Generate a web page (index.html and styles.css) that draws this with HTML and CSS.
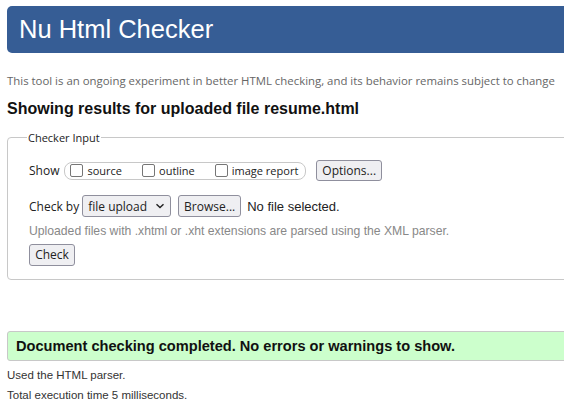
FILE: index.html
```html
<!DOCTYPE html>
<html lang="en">
<head>
<meta charset="utf-8">
<title>Nu Html Checker</title>
<link rel="stylesheet" href="styles.css">
</head>
<body>
<div class="page">
  <h1 class="banner">Nu Html Checker</h1>
  <p class="intro">This tool is an ongoing experiment in better HTML checking, and its behavior remains subject to change</p>
  <h2 class="results-title">Showing results for uploaded file resume.html</h2>
  <fieldset class="checker">
    <legend class="legend">Checker Input</legend>
    <div class="row show-row">
      <span class="label">Show</span>
      <div class="pill">
        <span class="opt"><span class="box"></span>source</span>
        <span class="opt"><span class="box"></span>outline</span>
        <span class="opt"><span class="box"></span>image report</span>
      </div>
      <span class="btn">Options...</span>
    </div>
    <div class="row check-row">
      <span class="label">Check by</span>
      <span class="select">file upload
        <svg class="chev" width="10" height="6" viewBox="0 0 10 6"><path d="M1.5 1.2 L5 4.6 L8.5 1.2" fill="none" stroke="#222" stroke-width="1.4"/></svg>
      </span>
      <span class="btn browse">Browse...</span>
      <span class="nofile">No file selected.</span>
    </div>
    <p class="hint">Uploaded files with .xhtml or .xht extensions are parsed using the XML parser.</p>
    <span class="btn check">Check</span>
  </fieldset>
  <div class="success">Document checking completed. No errors or warnings to show.</div>
  <p class="meta first">Used the HTML parser.</p>
  <p class="meta">Total execution time 5 milliseconds.</p>
</div>
</body>
</html>
```
FILE: styles.css
```css
html { overflow: hidden; background: #fff; }
body {
  margin: 0;
  font-family: "Liberation Sans", Arial, sans-serif;
  color: #222;
}
.page {
  width: 600px;
  padding: 6px 0 0 7px;
}
.banner {
  margin: 0;
  background: #365d95;
  color: #fff;
  font-weight: normal;
  font-size: 25.5px;
  line-height: 47px;
  height: 47px;
  padding-left: 12px;
  border-radius: 5px;
}
.intro {
  margin: 21px 0 0 0;
  font-family: "Open Sans", sans-serif;
  font-size: 11.4px;
  color: #666;
  line-height: 14px;
}
.results-title {
  margin: 11px 0 0 0;
  font-size: 16px;
  line-height: 20px;
  color: #111;
}
.checker {
  margin: 11px 0 0 0;
  border: 1px solid #c8c8c8;
  border-radius: 4px;
  padding: 15px 0 13px 21px;
  font-family: "Open Sans", sans-serif;
}
.legend {
  font-size: 11px;
  padding: 0 1px;
  margin-left: -2px;
  color: #222;
}
.row {
  display: flex;
  align-items: center;
}
.label {
  font-size: 12px;
  margin-right: 5px;
}
.pill {
  display: flex;
  align-items: center;
  gap: 20px;
  border: 1px solid #c8c8c8;
  border-radius: 8px;
  height: 16px;
  padding: 0 7px 0 5px;
  margin-right: 10px;
}
.opt {
  display: flex;
  align-items: center;
  font-size: 11px;
}
.box {
  width: 11px;
  height: 11px;
  border: 1px solid #767676;
  border-radius: 2px;
  margin-right: 4px;
}
.btn {
  display: inline-flex;
  align-items: center;
  justify-content: center;
  background: #efeff2;
  border: 1px solid #8f8f9d;
  border-radius: 3px;
  font-size: 12px;
  height: 19px;
  padding: 0 5px;
}
.check-row {
  margin-top: 14px;
}
.select {
  display: inline-flex;
  align-items: center;
  background: #efeff2;
  border: 1px solid #8f8f9d;
  border-radius: 3px;
  font-size: 12px;
  height: 20px;
  padding: 0 5px;
  margin-right: 7px;
  margin-left: -2px;
}
.chev { margin-left: 8px; }
.browse { height: 20px; margin-right: 6px; }
.nofile {
  font-family: "Liberation Sans", Arial, sans-serif;
  font-size: 13px;
}
.hint {
  margin: 7px 0 4px 0;
  font-family: "Liberation Sans", Arial, sans-serif;
  font-size: 12.2px;
  color: #888;
}
.check { width: 34px; height: 20px; }
.success {
  margin-top: 51px;
  background: #ccffcc;
  border: 1px solid #c8c8c8;
  border-radius: 3px;
  height: 28px;
  line-height: 28px;
  padding-left: 8px;
  font-weight: bold;
  font-size: 14.6px;
  color: #111;
}
.meta {
  margin: 6px 0 0 0;
  font-size: 11.5px;
  line-height: 14px;
  color: #333;
}
.meta.first { margin-top: 7px; }
```
